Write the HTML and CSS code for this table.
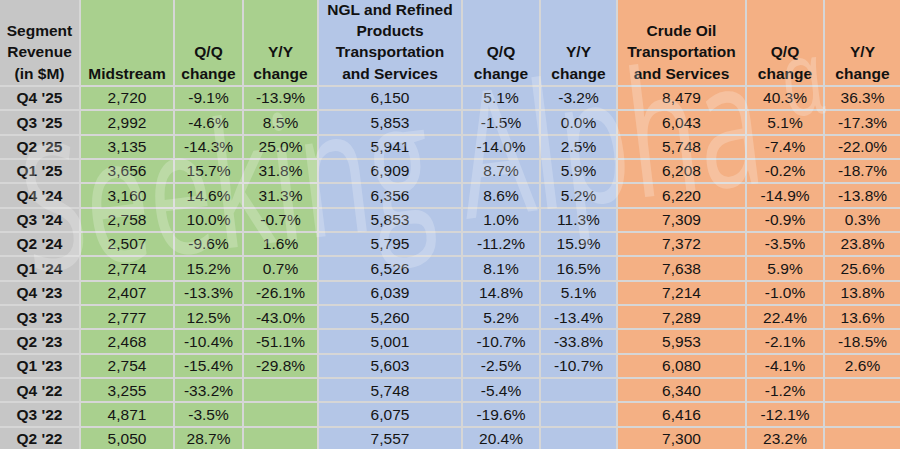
FILE: index.html
```html
<!DOCTYPE html>
<html>
<head>
<meta charset="utf-8">
<link rel="stylesheet" href="styles.css">
</head>
<body>
<div class="wrap">
  <div class="sheet">
    <div class="c hd lbl">Segment<br>Revenue<br>(in $M)</div>
    <div class="c hd g">Midstream</div>
    <div class="c hd g">Q/Q<br>change</div>
    <div class="c hd g">Y/Y<br>change</div>
    <div class="c hd b">NGL and Refined<br>Products<br>Transportation<br>and Services</div>
    <div class="c hd b">Q/Q<br>change</div>
    <div class="c hd b">Y/Y<br>change</div>
    <div class="c hd o">Crude Oil<br>Transportation<br>and Services</div>
    <div class="c hd o">Q/Q<br>change</div>
    <div class="c hd o">Y/Y<br>change</div>

    <div class="c lbl">Q4 '25</div><div class="c g">2,720</div><div class="c g">-9.1%</div><div class="c g">-13.9%</div><div class="c b">6,150</div><div class="c b">5.1%</div><div class="c b">-3.2%</div><div class="c o">8,479</div><div class="c o">40.3%</div><div class="c o">36.3%</div>
    <div class="c lbl">Q3 '25</div><div class="c g">2,992</div><div class="c g">-4.6%</div><div class="c g">8.5%</div><div class="c b">5,853</div><div class="c b">-1.5%</div><div class="c b">0.0%</div><div class="c o">6,043</div><div class="c o">5.1%</div><div class="c o">-17.3%</div>
    <div class="c lbl">Q2 '25</div><div class="c g">3,135</div><div class="c g">-14.3%</div><div class="c g">25.0%</div><div class="c b">5,941</div><div class="c b">-14.0%</div><div class="c b">2.5%</div><div class="c o">5,748</div><div class="c o">-7.4%</div><div class="c o">-22.0%</div>
    <div class="c lbl">Q1 '25</div><div class="c g">3,656</div><div class="c g">15.7%</div><div class="c g">31.8%</div><div class="c b">6,909</div><div class="c b">8.7%</div><div class="c b">5.9%</div><div class="c o">6,208</div><div class="c o">-0.2%</div><div class="c o">-18.7%</div>
    <div class="c lbl">Q4 '24</div><div class="c g">3,160</div><div class="c g">14.6%</div><div class="c g">31.3%</div><div class="c b">6,356</div><div class="c b">8.6%</div><div class="c b">5.2%</div><div class="c o">6,220</div><div class="c o">-14.9%</div><div class="c o">-13.8%</div>
    <div class="c lbl">Q3 '24</div><div class="c g">2,758</div><div class="c g">10.0%</div><div class="c g">-0.7%</div><div class="c b">5,853</div><div class="c b">1.0%</div><div class="c b">11.3%</div><div class="c o">7,309</div><div class="c o">-0.9%</div><div class="c o">0.3%</div>
    <div class="c lbl">Q2 '24</div><div class="c g">2,507</div><div class="c g">-9.6%</div><div class="c g">1.6%</div><div class="c b">5,795</div><div class="c b">-11.2%</div><div class="c b">15.9%</div><div class="c o">7,372</div><div class="c o">-3.5%</div><div class="c o">23.8%</div>
    <div class="c lbl">Q1 '24</div><div class="c g">2,774</div><div class="c g">15.2%</div><div class="c g">0.7%</div><div class="c b">6,526</div><div class="c b">8.1%</div><div class="c b">16.5%</div><div class="c o">7,638</div><div class="c o">5.9%</div><div class="c o">25.6%</div>
    <div class="c lbl">Q4 '23</div><div class="c g">2,407</div><div class="c g">-13.3%</div><div class="c g">-26.1%</div><div class="c b">6,039</div><div class="c b">14.8%</div><div class="c b">5.1%</div><div class="c o">7,214</div><div class="c o">-1.0%</div><div class="c o">13.8%</div>
    <div class="c lbl">Q3 '23</div><div class="c g">2,777</div><div class="c g">12.5%</div><div class="c g">-43.0%</div><div class="c b">5,260</div><div class="c b">5.2%</div><div class="c b">-13.4%</div><div class="c o">7,289</div><div class="c o">22.4%</div><div class="c o">13.6%</div>
    <div class="c lbl">Q2 '23</div><div class="c g">2,468</div><div class="c g">-10.4%</div><div class="c g">-51.1%</div><div class="c b">5,001</div><div class="c b">-10.7%</div><div class="c b">-33.8%</div><div class="c o">5,953</div><div class="c o">-2.1%</div><div class="c o">-18.5%</div>
    <div class="c lbl">Q1 '23</div><div class="c g">2,754</div><div class="c g">-15.4%</div><div class="c g">-29.8%</div><div class="c b">5,603</div><div class="c b">-2.5%</div><div class="c b">-10.7%</div><div class="c o">6,080</div><div class="c o">-4.1%</div><div class="c o">2.6%</div>
    <div class="c lbl">Q4 '22</div><div class="c g">3,255</div><div class="c g">-33.2%</div><div class="c g"></div><div class="c b">5,748</div><div class="c b">-5.4%</div><div class="c b"></div><div class="c o">6,340</div><div class="c o">-1.2%</div><div class="c o"></div>
    <div class="c lbl">Q3 '22</div><div class="c g">4,871</div><div class="c g">-3.5%</div><div class="c g"></div><div class="c b">6,075</div><div class="c b">-19.6%</div><div class="c b"></div><div class="c o">6,416</div><div class="c o">-12.1%</div><div class="c o"></div>
    <div class="c lbl">Q2 '22</div><div class="c g">5,050</div><div class="c g">28.7%</div><div class="c g"></div><div class="c b">7,557</div><div class="c b">20.4%</div><div class="c b"></div><div class="c o">7,300</div><div class="c o">23.2%</div><div class="c o"></div>
  </div>
  <div class="watermark">Seeking Alpha<span class="alpha">α</span></div>
</div>
</body>
</html>
```

FILE: styles.css
```css
html, body {
  margin: 0;
  padding: 0;
  background: #ffffff;
}

.wrap {
  position: relative;
  width: 900px;
  height: 449px;
  overflow: hidden;
}

.sheet {
  display: grid;
  grid-template-columns: 79px 92px 67px 73px 142px 76px 75px 127px 76px 75px;
  grid-template-rows: 85px repeat(15, 22.35px);
  gap: 2px;
  background: #d6d6d6;
  width: 900px;
  font-family: "Liberation Sans", Arial, sans-serif;
  font-size: 15.5px;
  color: #141414;
}

.c {
  display: flex;
  align-items: center;
  justify-content: center;
  text-align: center;
  white-space: nowrap;
  line-height: 1;
}

.hd {
  align-items: flex-end;
  font-weight: bold;
  line-height: 21.3px;
  padding-bottom: 1px;
  color: #111111;
}

.lbl {
  background: #c6c6c6;
  font-weight: bold;
}

.g { background: #a9d08e; }
.b { background: #b4c6e7; }
.o { background: #f4b084; }

.watermark {
  position: absolute;
  left: 22px;
  top: 118px;
  font-family: "Open Sans", sans-serif;
  font-size: 175px;
  line-height: 1;
  color: rgba(255, 255, 255, 0.22);
  white-space: nowrap;
  transform-origin: 0 50%;
  transform: rotate(-7deg) scaleX(0.65);
  pointer-events: none;
}

.alpha {
  font-size: 105px;
  vertical-align: 62px;
  margin-left: 40px;
}
```
